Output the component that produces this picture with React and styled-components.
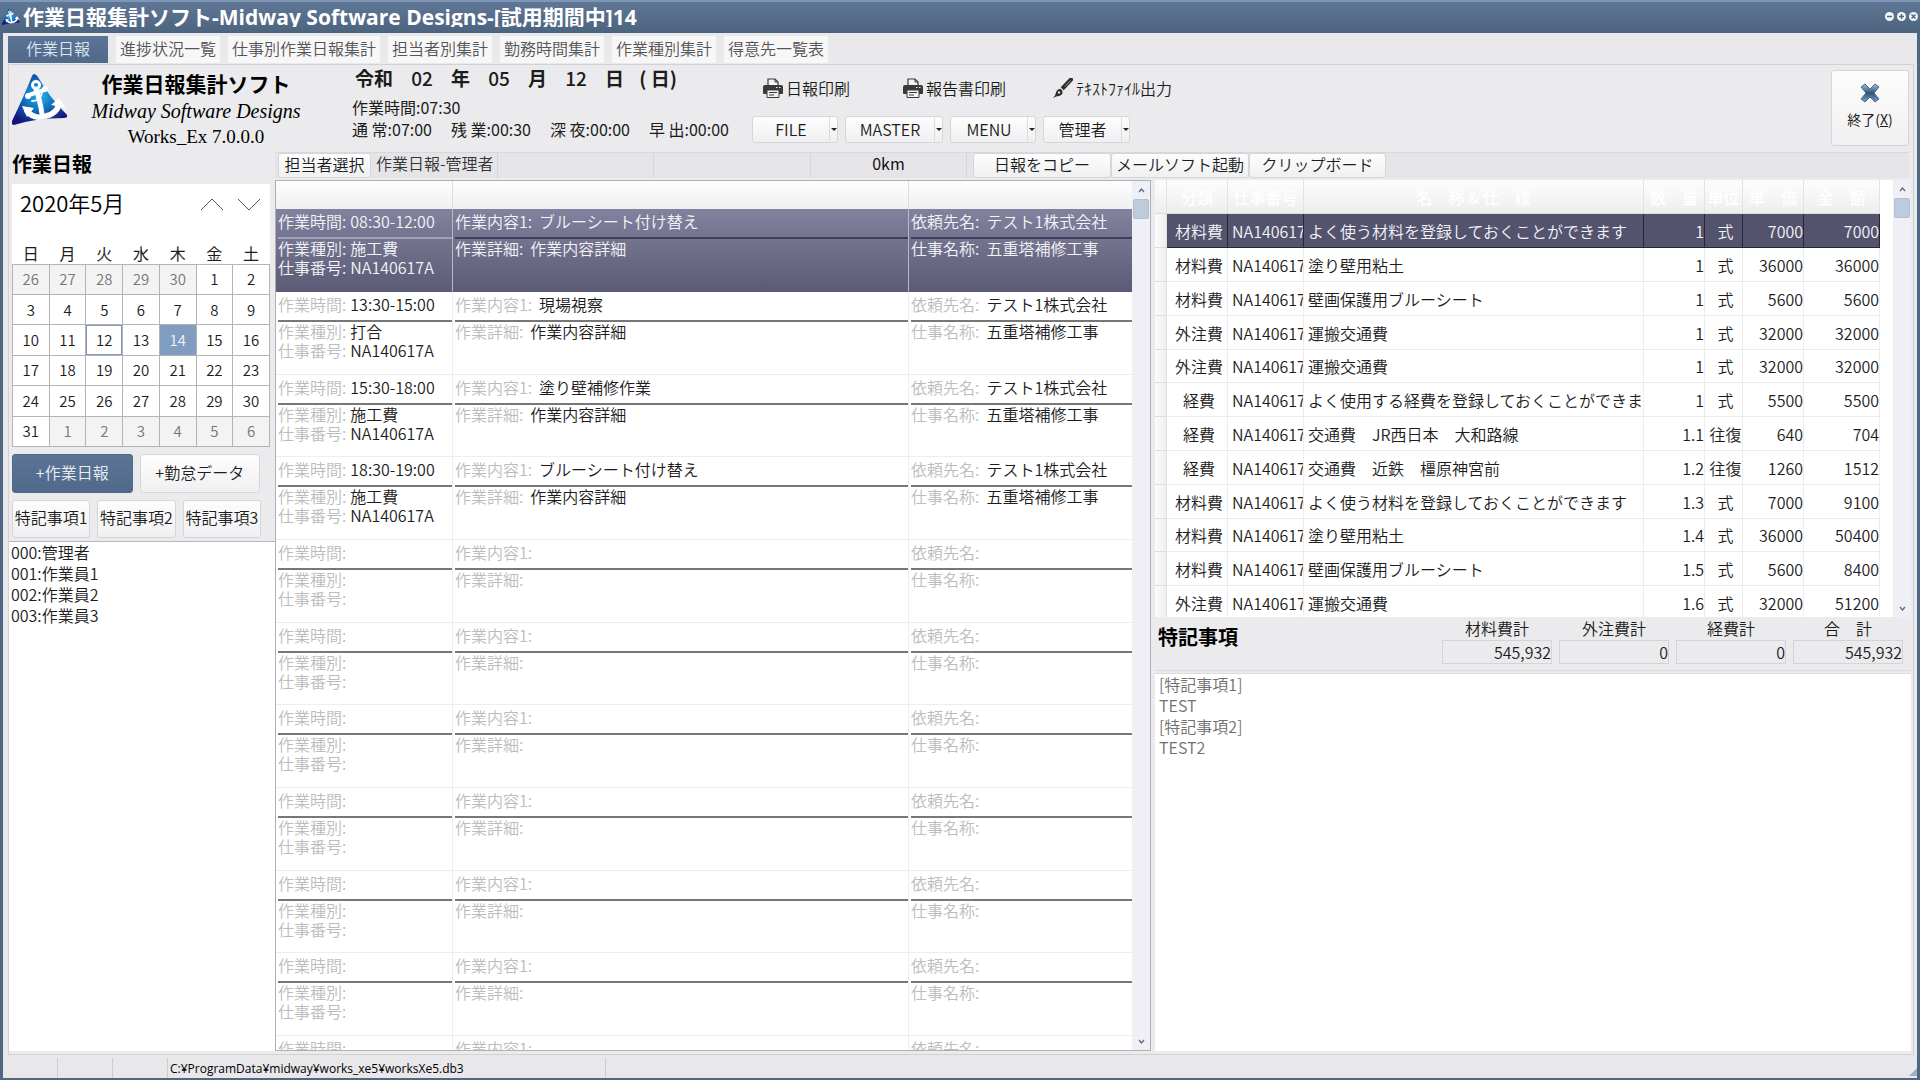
import React from 'react'
import styled, { createGlobalStyle, css } from 'styled-components'

const TABS = ['作業日報', '進捗状況一覧', '仕事別作業日報集計', '担当者別集計', '勤務時間集計', '作業種別集計', '得意先一覧表']

const WEEKDAYS = ['日', '月', '火', '水', '木', '金', '土']

const WEEKS = [
    [26, 27, 28, 29, 30, 1, 2],
    [3, 4, 5, 6, 7, 8, 9],
    [10, 11, 12, 13, 14, 15, 16],
    [17, 18, 19, 20, 21, 22, 23],
    [24, 25, 26, 27, 28, 29, 30],
    [31, 1, 2, 3, 4, 5, 6],
]

const STAFF = ['000:管理者', '001:作業員1', '002:作業員2', '003:作業員3']

const EMPTY = { time: '', kind: '', no: '', work: '', detail: '', client: '', job: '' }

const REPORTS = [
    { time: '08:30-12:00', kind: '施工費', no: 'NA140617A', work: 'ブルーシート付け替え', detail: '作業内容詳細', client: 'テスト1株式会社', job: '五重塔補修工事' },
    { time: '13:30-15:00', kind: '打合', no: 'NA140617A', work: '現場視察', detail: '作業内容詳細', client: 'テスト1株式会社', job: '五重塔補修工事' },
    { time: '15:30-18:00', kind: '施工費', no: 'NA140617A', work: '塗り壁補修作業', detail: '作業内容詳細', client: 'テスト1株式会社', job: '五重塔補修工事' },
    { time: '18:30-19:00', kind: '施工費', no: 'NA140617A', work: 'ブルーシート付け替え', detail: '作業内容詳細', client: 'テスト1株式会社', job: '五重塔補修工事' },
    EMPTY, EMPTY, EMPTY, EMPTY, EMPTY, EMPTY, EMPTY,
]

const COSTS = [
    ['材料費', 'よく使う材料を登録しておくことができます', '1', '式', '7000', '7000'],
    ['材料費', '塗り壁用粘土', '1', '式', '36000', '36000'],
    ['材料費', '壁画保護用ブルーシート', '1', '式', '5600', '5600'],
    ['外注費', '運搬交通費', '1', '式', '32000', '32000'],
    ['外注費', '運搬交通費', '1', '式', '32000', '32000'],
    ['経費', 'よく使用する経費を登録しておくことができます', '1', '式', '5500', '5500'],
    ['経費', '交通費　JR西日本　大和路線', '1.1', '往復', '640', '704'],
    ['経費', '交通費　近鉄　橿原神宮前', '1.2', '往復', '1260', '1512'],
    ['材料費', 'よく使う材料を登録しておくことができます', '1.3', '式', '7000', '9100'],
    ['材料費', '塗り壁用粘土', '1.4', '式', '36000', '50400'],
    ['材料費', '壁画保護用ブルーシート', '1.5', '式', '5600', '8400'],
    ['外注費', '運搬交通費', '1.6', '式', '32000', '51200'],
]

const TOTALS = [
    ['材料費計', '545,932'],
    ['外注費計', '0'],
    ['経費計', '0'],
    ['合　計', '545,932'],
]

function Logo({ size }) {
    return (
        <svg width={size} height={size} viewBox="0 0 56 52" aria-hidden="true">
            <defs>
                <radialGradient id="sea" cx="0.5" cy="0.42" r="0.6">
                    <stop offset="0" stopColor="#2fb4e6" />
                    <stop offset="0.45" stopColor="#1273c0" />
                    <stop offset="1" stopColor="#15157c" />
                </radialGradient>
            </defs>
            <path d="M22 0 Q24 0 26 3 Q38 24 55 41 Q56 44 52 44 Q24 44 2 51 Q-1 51 0 47 Q12 22 20 2 Q21 0 22 0Z" fill="url(#sea)" />
            <g fill="none" stroke="#fff" strokeLinecap="round">
                <circle cx="24" cy="11" r="3.5" strokeWidth="3" />
                <path d="M24 15 Q28 26 30 40" strokeWidth="5" />
                <path d="M17 21 L32 16" strokeWidth="4" />
                <path d="M20 27 Q29 27 30 18" strokeWidth="1.8" />
                <path d="M15 37 Q22 46 34 42 Q46 39 47 29" strokeWidth="5.5" />
            </g>
            <circle cx="16" cy="22" r="3" fill="#fff" />
            <circle cx="33" cy="15" r="3" fill="#fff" />
            <path d="M10 32 L22 34 L15 43Z M39 31 L47 24 L54 34Z" fill="#fff" />
        </svg>
    )
}

function PrinterIcon() {
    return (
        <svg width="20" height="20" viewBox="0 0 20 20" aria-hidden="true">
            <path d="M5 8V1h7l3 3v4" fill="#f4f4f4" stroke="#3a3a3a" strokeWidth="1.2" />
            <path d="M12 1v3h3" fill="none" stroke="#3a3a3a" />
            <path d="M2 7h16q2 0 2 2v6q0 1-1 1H1q-1 0-1-1V9q0-2 2-2z" fill="#3a3a3a" />
            <path d="M13 9.500h1.500M16 9.500h1.500" stroke="#eee" strokeWidth="1.200" />
            <path d="M4 12h12v7.500H4z" fill="#f4f4f4" stroke="#3a3a3a" />
            <path d="M6 14.500h8M6 17h5" stroke="#3a3a3a" />
        </svg>
    )
}

function BrushIcon() {
    return (
        <svg width="20" height="20" viewBox="0 0 20 20" aria-hidden="true">
            <path d="M18 1.500 L9 11" stroke="#2c2c2c" strokeWidth="4" strokeLinecap="round" />
            <path d="M17.500 2.500 L12 8.500" stroke="#999" strokeWidth="1" />
            <path d="M7 9.500 L10.500 13" stroke="#ebebed" strokeWidth="1.200" />
            <path d="M0 20 Q3 17 3 14.500 Q4 11 7 11 L9.500 13.500 Q10 17 6 18 Q3 18 0 20Z" fill="#2c2c2c" />
            <circle cx="6" cy="14.500" r="1.200" fill="#ddd" />
        </svg>
    )
}

function ExitIcon() {
    return (
        <svg width="20" height="20" viewBox="0 0 20 20" aria-hidden="true">
            <defs>
                <linearGradient id="steel" x1="0" y1="0" x2="0" y2="1">
                    <stop offset="0" stopColor="#a9c2d6" />
                    <stop offset="0.5" stopColor="#2f5478" />
                    <stop offset="1" stopColor="#7ba0bf" />
                </linearGradient>
            </defs>
            <path d="M1 4 L5 1 L10 6 L15 1 L19 4 L14 10 L19 16 L15 19 L10 14 L5 19 L1 16 L6 10Z" fill="url(#steel)" stroke="#4a6c8c" strokeLinejoin="round" />
        </svg>
    )
}

function Arrow({ down, wide }) {
    return wide ? (
        <svg width="24" height="13" viewBox="0 0 24 13" aria-hidden="true">
            <path d={down ? 'M1 1 L12 12 L23 1' : 'M1 12 L12 1 L23 12'} fill="none" stroke="#555" />
        </svg>
    ) : (
        <svg width="7" height="5" viewBox="0 0 7 5" aria-hidden="true">
            <path d={down ? 'M1 1 L3.500 4 L6 1' : 'M1 4 L3.500 1 L6 4'} fill="none" stroke="#5a6a80" strokeWidth="1.300" />
        </svg>
    )
}

function ScrollBar() {
    return (
        <Track>
            <TrackButton type="button" aria-label="上へ"><Arrow /></TrackButton>
            <Thumb />
            <TrackButton type="button" aria-label="下へ"><Arrow down /></TrackButton>
        </Track>
    )
}

function DropButton({ label, width }) {
    return (
        <SplitButton type="button" $width={width}>
            <span>{label}</span>
            <Caret />
        </SplitButton>
    )
}

function ReportRow({ report, selected, short }) {
    return (
        <ReportTr $selected={selected}>
            <td>
                <Line $first><Label>作業時間:</Label>{report.time}</Line>
                {!short && <Line><Label>作業種別:</Label>{report.kind}</Line>}
                {!short && <Line><Label>仕事番号:</Label>{report.no}</Line>}
            </td>
            <td>
                <Line $first><Label $wide>作業内容1:</Label>{report.work}</Line>
                {!short && <Line><Label $wide>作業詳細:</Label>{report.detail}</Line>}
            </td>
            <td>
                <Line $first><Label $wide>依頼先名:</Label>{report.client}</Line>
                {!short && <Line><Label $wide>仕事名称:</Label>{report.job}</Line>}
            </td>
        </ReportTr>
    )
}

function App() {
    const dayState = (week, day) => {
        if ((week === 0 && day > 7) || (week === 5 && day < 8)) return 'other'
        if (day === 14) return 'selected'
        if (day === 12) return 'today'
        return 'normal'
    }

    return (
        <Window>
            <GlobalStyle />
            <TitleBar>
                <Logo size={18} />
                <Title>作業日報集計ソフト-Midway Software Designs-[試用期間中]14</Title>
                <WindowButton type="button" aria-label="最小化"><svg width="9" height="9" viewBox="0 0 9 9"><path d="M2 4.500h5" stroke="#4f6580" strokeWidth="1.500" /></svg></WindowButton>
                <WindowButton type="button" aria-label="最大化"><svg width="9" height="9" viewBox="0 0 9 9"><path d="M2 4.500h5M4.500 2v5" stroke="#4f6580" strokeWidth="1.500" /></svg></WindowButton>
                <WindowButton type="button" aria-label="閉じる"><svg width="9" height="9" viewBox="0 0 9 9"><path d="M2.500 2.500l4 4M6.500 2.500l-4 4" stroke="#4f6580" strokeWidth="1.500" /></svg></WindowButton>
            </TitleBar>

            <Tabs>
                {TABS.map((tab, i) => <Tab type="button" key={tab} $active={i === 0}>{tab}</Tab>)}
            </Tabs>

            <Panel>
                <Header>
                    <Brand>
                        <Logo size={56} />
                        <BrandText>
                            <BrandName>作業日報集計ソフト</BrandName>
                            <BrandMaker>Midway Software Designs</BrandMaker>
                            <BrandVersion>Works_Ex 7.0.0.0</BrandVersion>
                        </BrandText>
                    </Brand>
                    <Summary>
                        <DateLine>
                            <span>令和</span><b>02</b><span>年</span><b>05</b><span>月</span><b>12</b><span>日</span><span>( 日)</span>
                        </DateLine>
                        <Hours>作業時間:07:30</Hours>
                        <Hours>
                            <span>通 常:07:00</span><span>残 業:00:30</span><span>深 夜:00:00</span><span>早 出:00:00</span>
                        </Hours>
                    </Summary>
                    <Tools>
                        <ToolRow>
                            <PlainButton type="button"><PrinterIcon />日報印刷</PlainButton>
                            <PlainButton type="button"><PrinterIcon />報告書印刷</PlainButton>
                            <PlainButton type="button"><BrushIcon />ﾃｷｽﾄﾌｧｲﾙ出力</PlainButton>
                        </ToolRow>
                        <MenuRow>
                            <DropButton label="FILE" width={86} />
                            <DropButton label="MASTER" width={98} />
                            <DropButton label="MENU" width={86} />
                            <DropButton label="管理者" width={87} />
                        </MenuRow>
                    </Tools>
                    <ExitButton type="button">
                        <ExitIcon />
                        <span>終了(<u>X</u>)</span>
                    </ExitButton>
                </Header>

                <ActionBar>
                    <Heading>作業日報</Heading>
                    <ActionStrip>
                        <RaisedButton type="button" $width={93}>担当者選択</RaisedButton>
                        <StripCell $width={127} $muted>作業日報-管理者</StripCell>
                        <StripCell $width={156} />
                        <StripCell $width={157} />
                        <StripCell $width={156}><Distance>0km</Distance></StripCell>
                        <StripGap />
                        <RaisedButton type="button" $width={138}>日報をコピー</RaisedButton>
                        <RaisedButton type="button" $width={138}>メールソフト起動</RaisedButton>
                        <RaisedButton type="button" $width={137}>クリップボード</RaisedButton>
                    </ActionStrip>
                </ActionBar>

                <Columns>
                    <Side>
                        <Calendar>
                            <MonthBar>
                                <Month>2020年5月</Month>
                                <MonthButton type="button" aria-label="前の月"><Arrow wide /></MonthButton>
                                <MonthButton type="button" aria-label="次の月"><Arrow wide down /></MonthButton>
                            </MonthBar>
                            <Days>
                                <thead>
                                    <tr>{WEEKDAYS.map((day) => <th key={day} scope="col">{day}</th>)}</tr>
                                </thead>
                                <tbody>
                                    {WEEKS.map((week, w) => (
                                        <tr key={w}>
                                            {week.map((day) => (
                                                <DayCell key={day} $state={dayState(w, day)}>
                                                    <button type="button">{day}</button>
                                                </DayCell>
                                            ))}
                                        </tr>
                                    ))}
                                </tbody>
                            </Days>
                        </Calendar>
                        <AddRow>
                            <AddButton type="button" $primary>+作業日報</AddButton>
                            <AddButton type="button">+勤怠データ</AddButton>
                        </AddRow>
                        <NoteRow>
                            <NoteButton type="button">特記事項1</NoteButton>
                            <NoteButton type="button">特記事項2</NoteButton>
                            <NoteButton type="button">特記事項3</NoteButton>
                        </NoteRow>
                        <StaffList>
                            {STAFF.map((name) => <li key={name}>{name}</li>)}
                        </StaffList>
                    </Side>

                    <ReportPane>
                        <Clip>
                            <ReportTable>
                                <colgroup>
                                    <col style={{ width: 177 }} />
                                    <col />
                                    <col style={{ width: 223 }} />
                                </colgroup>
                                <thead>
                                    <tr><th /><th /><th /></tr>
                                </thead>
                                <tbody>
                                    {REPORTS.map((report, i) => (
                                        <ReportRow key={i} report={report} selected={i === 0} short={i === REPORTS.length - 1} />
                                    ))}
                                </tbody>
                            </ReportTable>
                        </Clip>
                        <ScrollBar />
                    </ReportPane>

                    <Detail>
                        <CostPane>
                            <Clip>
                                <CostTable>
                                    <colgroup>
                                        <col style={{ width: 12 }} />
                                        <col style={{ width: 61 }} />
                                        <col style={{ width: 76 }} />
                                        <col />
                                        <col style={{ width: 61 }} />
                                        <col style={{ width: 38 }} />
                                        <col style={{ width: 61 }} />
                                        <col style={{ width: 76 }} />
                                    </colgroup>
                                    <thead>
                                        <tr>
                                            <th />
                                            <th>分類</th>
                                            <th>仕事番号</th>
                                            <th>名　称 &amp; 仕　様</th>
                                            <th>数　量</th>
                                            <th>単位</th>
                                            <th>単　価</th>
                                            <th>金　額</th>
                                        </tr>
                                    </thead>
                                    <tbody>
                                        {COSTS.map(([kind, name, qty, unit, price, total], i) => (
                                            <CostTr key={i} $selected={i === 0}>
                                                <td />
                                                <CostTd $align="center">{kind}</CostTd>
                                                <CostTd>NA140617A</CostTd>
                                                <CostTd>{name}</CostTd>
                                                <CostTd $align="right">{qty}</CostTd>
                                                <CostTd $align="center">{unit}</CostTd>
                                                <CostTd $align="right">{price}</CostTd>
                                                <CostTd $align="right">{total}</CostTd>
                                            </CostTr>
                                        ))}
                                    </tbody>
                                </CostTable>
                            </Clip>
                            <ScrollBar />
                        </CostPane>
                        <TotalBar>
                            <Heading as="label" htmlFor="notes">特記事項</Heading>
                            <Totals>
                                {TOTALS.map(([label, value]) => (
                                    <Total key={label}>
                                        {label}
                                        <TotalInput readOnly value={value} />
                                    </Total>
                                ))}
                            </Totals>
                        </TotalBar>
                        <Notes id="notes" readOnly value={'[特記事項1]\nTEST\n[特記事項2]\nTEST2'} />
                    </Detail>
                </Columns>
            </Panel>

            <StatusBar>
                <StatusCell $width={55} />
                <StatusCell $width={55} />
                <StatusCell $width={55} />
                <StatusCell $width={438}>C:¥ProgramData¥midway¥works_xe5¥worksXe5.db3</StatusCell>
                <Grip width="8" height="8" viewBox="0 0 8 8"><path d="M8 0v8H0z" fill="#9fb0c6" /></Grip>
            </StatusBar>
        </Window>
    )
}

export default App

const GlobalStyle = createGlobalStyle`
    * {
        box-sizing: border-box;
    }

    body {
        margin: 0;
        font-family: "Noto Sans CJK JP", sans-serif;
        font-size: 16px;
        font-weight: 350;
        line-height: 20px;
        color: #1c1c1c;
    }

    button, input, textarea {
        font: inherit;
        color: inherit;
        margin: 0;
        padding: 0;
        border: 0;
        background: none;
        white-space: nowrap;
    }

    table {
        border-spacing: 0;
        table-layout: fixed;
        width: 100%;
    }

    th, td {
        padding: 0;
    }
`

const raised = css`
    background: linear-gradient(#fdfdfd, #f0f0f2);
    border: 1px solid #d6d6da;
    border-radius: 3px;
`

const Window = styled.div`
    height: 100vh;
    display: flex;
    flex-direction: column;
    border: 3px solid #4f6685;
    border-top: 0;
    border-bottom-width: 2px;
    background: #e9e9eb;
`

const TitleBar = styled.header`
    flex: none;
    display: flex;
    align-items: center;
    gap: 3px;
    height: 33px;
    margin: 0 -3px;
    padding: 0 2px 2px;
    border-top: 2px solid #7f97b6;
    background: linear-gradient(#5f7696, #4d647f);
`

const Title = styled.h1`
    flex: 1;
    height: 20px;
    margin: 0;
    overflow: hidden;
    font-family: "Open Sans", "Noto Sans CJK JP", sans-serif;
    font-size: 21px;
    line-height: 20px;
    font-weight: 700;
    color: #fff;
    white-space: nowrap;
`

const WindowButton = styled.button`
    display: flex;
    border-radius: 50%;
    background: #f4f6f8;
`

const Tabs = styled.nav`
    flex: none;
    display: flex;
    gap: 8px;
    padding: 3px 5px 1px;
`

const Tab = styled.button`
    height: 27px;
    padding: ${p => p.$active ? '0 18px 3px' : '0 4px 3px'};
    color: ${p => p.$active ? '#dfe5ee' : '#555'};
    background: ${p => p.$active ? 'linear-gradient(#5c7597, #50698a)' : '#f7f7f8'};
`

const Panel = styled.main`
    flex: 1;
    min-height: 0;
    display: flex;
    flex-direction: column;
    margin: 0 3px 0 5px;
    border: 1px solid #d2d2d6;
    background: #ebebed;
`

const Header = styled.section`
    flex: none;
    display: grid;
    grid-template-columns: 343px 400px 1fr auto;
    height: 87px;
    padding-right: 4px;
`

const Brand = styled.div`
    display: flex;
    padding: 7px 0 0 3px;
`

const BrandText = styled.div`
    flex: 1;
    margin-top: -2px;
    padding-right: 28px;
    text-align: center;
    color: #000;
`

const BrandName = styled.div`
    font-size: 21px;
    line-height: 26px;
    font-weight: 700;
`

const BrandMaker = styled.div`
    font-family: "Liberation Serif", serif;
    font-size: 20px;
    line-height: 30px;
    font-style: italic;
`

const BrandVersion = styled.div`
    font-family: "Liberation Serif", serif;
    font-size: 19px;
    line-height: 22px;
`

const Summary = styled.div`
    font-weight: 400;
    white-space: nowrap;
`

const DateLine = styled.div`
    display: flex;
    justify-content: space-between;
    width: 325px;
    padding: 0 0 4px 3px;
    font-size: 19px;
    line-height: 26px;
    font-weight: 700;

    b {
        padding: 0 3px;
        font-weight: 500;
    }
`

const Hours = styled.div`
    display: flex;
    justify-content: space-between;
    width: 377px;
    padding-top: 2px;
`

const Tools = styled.div`
    display: flex;
    flex-direction: column;
    gap: 16px;
    padding-top: 11px;
`

const ToolRow = styled.div`
    display: grid;
    grid-template-columns: 140px 150px auto;
    padding-left: 11px;
`

const PlainButton = styled.button`
    display: flex;
    align-items: center;
    gap: 3px;
    height: 24px;
`

const MenuRow = styled.div`
    display: flex;
    gap: 7px;
`

const SplitButton = styled.button`
    ${raised}
    display: flex;
    align-items: center;
    width: ${p => p.$width}px;
    height: 27px;
    padding-bottom: 1px;

    span {
        flex: 1;
    }
`

const Caret = styled.i`
    display: flex;
    align-items: center;
    height: 24px;
    padding-left: 1px;
    border-left: 1px solid #dcdce0;

    &:after {
        content: "";
        border: 3px solid transparent;
        border-top-color: #222;
        border-bottom: 0;
    }
`

const ExitButton = styled.button`
    ${raised}
    display: flex;
    flex-direction: column;
    align-items: center;
    justify-content: center;
    gap: 6px;
    width: 78px;
    height: 76px;
    margin-top: 5px;
    padding-bottom: 4px;
    font-size: 14px;
    font-weight: 400;
`

const ActionBar = styled.section`
    flex: none;
    display: grid;
    grid-template-columns: 266px 1fr;
    height: 28px;
`

const Heading = styled.h2`
    margin: 0;
    padding-left: 3px;
    font-size: 20px;
    line-height: 24px;
    font-weight: 700;
    color: #000;
`

const ActionStrip = styled.div`
    display: flex;
    height: 26px;
    padding-left: 3px;
    margin-right: 4px;
    border-top: 1px solid #d8d8dc;
    background: #e5e5e7;
`

const RaisedButton = styled.button`
    ${raised}
    width: ${p => p.$width}px;
    height: 25px;
    padding-bottom: 4px;
`

const StripCell = styled.div`
    width: ${p => p.$width}px;
    padding-left: 5px;
    border-right: 1px solid #d4d4d8;
    color: ${p => p.$muted ? '#333' : '#111'};
    white-space: nowrap;
`

const Distance = styled.div`
    padding-right: 5px;
    text-align: center;
    font-weight: 400;
`

const StripGap = styled.div`
    width: 6px;
`

const Columns = styled.div`
    flex: 1;
    min-height: 0;
    display: grid;
    grid-template-columns: 266px minmax(0, 875fr) minmax(0, 759fr);
    padding: 0 2px 3px 0;
`

const Side = styled.aside`
    display: flex;
    flex-direction: column;
    padding-top: 4px;
`

const Calendar = styled.section`
    margin: 0 5px 7px 3px;
    background: #fff;
`

const MonthBar = styled.div`
    display: flex;
    align-items: center;
    height: 58px;
    padding: 0 9px 23px 8px;
    color: #000;
`

const Month = styled.div`
    flex: 1;
    font-size: 22px;
    line-height: 26px;
`

const MonthButton = styled.button`
    display: flex;
    width: 37px;
    padding-top: 5px;
    justify-content: flex-end;
`

const Days = styled.table`
    height: 205px;
    border-collapse: collapse;
    text-align: center;

    th {
        height: 22px;
        font-weight: 400;
    }
`

const dayLook = {
    other: 'background: #f3f3f3; color: #777;',
    today: 'box-shadow: inset 0 0 0 1px #7f98bb;',
    selected: 'background: #809cbe; color: #f0f4f8;',
    normal: '',
}

const DayCell = styled.td`
    border: 1px solid #b4b4b4;
    font-size: 15px;
    ${p => dayLook[p.$state]}

    button {
        width: 100%;
    }
`

const AddRow = styled.div`
    display: flex;
    gap: 7px;
    padding: 0 15px 7px 3px;
`

const AddButton = styled.button`
    ${raised}
    flex: 1;
    height: 39px;
    padding-bottom: 3px;
    ${p => p.$primary && 'background: linear-gradient(#5c7597, #50698a); border-color: #50698a; color: #eaeef3;'}
`

const NoteRow = styled.div`
    display: flex;
    gap: 7px;
    padding: 0 14px 3px 3px;
`

const NoteButton = styled.button`
    ${raised}
    flex: 1;
    height: 38px;
    padding-bottom: 4px;
`

const StaffList = styled.ul`
    flex: 1;
    margin: 0;
    padding: 0 2px;
    border-top: 1px solid #b8b8bc;
    background: #fff;
    list-style: none;

    li {
        line-height: 21px;
    }
`

const ReportPane = styled.section`
    display: flex;
    min-height: 0;
    border: 1px solid #b0b0b4;
    background: #fff;
`

const Clip = styled.div`
    flex: 1;
    min-width: 0;
    overflow: hidden;
`

const Track = styled.div`
    display: flex;
    flex-direction: column;
    width: 18px;
    padding: 0 1px;
    background: #eef0f5;
`

const TrackButton = styled.button`
    display: flex;
    align-items: center;
    justify-content: center;
    height: 18px;
`

const Thumb = styled.div`
    height: 20px;
    margin-bottom: auto;
    border: 1px solid #b0c0d2;
    border-radius: 2px;
    background: #becbda;
`

const ReportTable = styled.table`
    th {
        height: 28px;
        border-right: 1px solid #ddd;
        background: linear-gradient(#fdfdfd, #f0f0f1);
    }

    th:last-child {
        border-right: 0;
    }
`

const Label = styled.span`
    margin-right: ${p => p.$wide ? 7 : 4}px;
    color: #bcbcbc;
`

const Line = styled.div`
    height: ${p => p.$first ? 30 : 19}px;
    margin-left: 2px;
    line-height: ${p => p.$first ? 25 : 19}px;
    border-bottom: ${p => p.$first ? '2px solid #777' : '0'};
    white-space: nowrap;
`

const ReportTr = styled.tr`
    height: 83px;

    &:nth-child(3n) {
        height: 82px;
    }

    td {
        vertical-align: top;
        border-right: 1px solid #eee;
        border-bottom: 1px solid #eee;
    }

    td:last-child {
        border-right: 0;
    }

    ${p => p.$selected && css`
        color: #f4f4f8;

        td {
            background: linear-gradient(#83829e, #5b5b76);
            border-color: #b8b8c8;
            border-bottom-color: #5b5b76;
        }

        td:first-child ${Line} {
            border-color: #a2a2b8;
        }

        ${Line} {
            border-color: #3f3f58;
        }

        ${Label} {
            color: #f4f4f8;
        }
    `}
`

const Detail = styled.section`
    display: flex;
    flex-direction: column;
    min-height: 0;
    padding-left: 4px;
`

const CostPane = styled.div`
    flex: none;
    display: flex;
    height: 437px;
    background: #fff;

    ${Clip} {
        margin-right: 13px;
    }
`

const CostTable = styled.table`
    th {
        height: 34px;
        overflow: hidden;
        border-right: 1px solid #e2e2e2;
        border-bottom: 1px solid #ddd;
        background: linear-gradient(#fdfdfd, #eeeeee);
        color: #fff;
        font-weight: 500;
        white-space: nowrap;
    }

    td:first-child {
        border-right: 1px solid #e0e0e0;
        border-bottom: 1px solid #ddd;
        background: linear-gradient(90deg, #fbfbfb, #efefef);
    }
`

const CostTd = styled.td`
    padding: 0 0 0 4px;
    overflow: hidden;
    border-right: 1px solid #ededed;
    border-bottom: 1px solid #ececec;
    text-align: ${p => p.$align || 'left'};
    white-space: nowrap;
`

const CostTr = styled.tr`
    height: 34px;

    &:nth-child(5n) {
        height: 33px;
    }

    ${p => p.$selected && css`
        color: #f4f4f8;

        ${CostTd} {
            border-color: #26263a;
            background: #53536d;
        }
    `}
`

const TotalBar = styled.div`
    flex: none;
    display: flex;
    justify-content: space-between;
    height: 57px;
    padding-right: 8px;
    border-bottom: 4px double #dcdcde;

    ${Heading} {
        padding-top: 8px;
    }
`

const Totals = styled.div`
    display: flex;
    gap: 7px;
`

const Total = styled.label`
    width: 110px;
    line-height: 23px;
    text-align: center;
`

const TotalInput = styled.input`
    display: block;
    width: 100%;
    height: 24px;
    border: 1px solid #d4d4d6;
    text-align: right;
`

const Notes = styled.textarea`
    flex: 1;
    padding: 0 4px;
    background: #fff;
    color: #707070;
    line-height: 21px;
    resize: none;
    outline: none;
`

const StatusBar = styled.footer`
    flex: none;
    display: flex;
    height: 23px;
    padding-top: 3px;
    background: #e8e8ea;
`

const StatusCell = styled.div`
    width: ${p => p.$width}px;
    padding-left: 2px;
    border-right: 1px solid #ceced2;
    font-family: "Open Sans", sans-serif;
    font-size: 12px;
    line-height: 22px;
    font-weight: 400;
    color: #000;
    white-space: nowrap;
`

const Grip = styled.svg`
    margin: auto 0 2px auto;
`
